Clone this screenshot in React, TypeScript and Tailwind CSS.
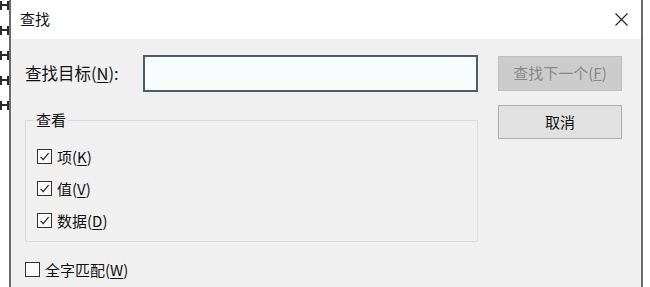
import React from "react"

const font = { fontFamily: '"Noto Sans CJK SC", "Noto Sans", sans-serif' }

function TreeMark() {
  return (
    <div className="relative w-[9px] h-[9px] border-l-2 border-r-2 border-[#2a2a2a]">
      <div className="absolute left-0 right-0 top-[3px] h-[2px] bg-[#2a2a2a]" />
    </div>
  )
}

function CheckBox({ checked }: { checked: boolean }) {
  return (
    <div className="w-[15px] h-[15px] border border-[#333] bg-[#fafafa] flex items-center justify-center">
      {checked && (
        <svg width="11" height="11" viewBox="0 0 11 11">
          <path d="M1.5 5.8 L4.2 8.6 L9.6 2.2" fill="none" stroke="#222" strokeWidth="1.2" />
        </svg>
      )}
    </div>
  )
}

function CheckRow({ label, k, checked }: { label: string; k: string; checked: boolean }) {
  return (
    <div className="flex items-center gap-[5px] h-[22px]">
      <CheckBox checked={checked} />
      <span className="text-[15px] text-[#111] leading-none">
        {label}(<span className="underline underline-offset-2">{k}</span>)
      </span>
    </div>
  )
}

export default function App() {
  return (
    <div className="w-[650px] h-[287px] flex bg-white overflow-hidden" style={font}>
      <div className="w-[9px] flex flex-col gap-[16px] pt-[1px]">
        <TreeMark />
        <TreeMark />
        <TreeMark />
        <TreeMark />
        <TreeMark />
      </div>

      <div className="w-[634px] h-[287px] flex flex-col border-l-2 border-r-2 border-[#6b6b6b]">
        <div className="h-[39px] bg-white flex items-center justify-between pl-[9px] pr-[13px]">
          <span className="text-[15px] text-[#111]">查找</span>
          <svg width="13" height="13" viewBox="0 0 13 13">
            <path d="M0.5 0.5 L12.5 12.5 M12.5 0.5 L0.5 12.5" stroke="#222" strokeWidth="1.1" />
          </svg>
        </div>

        <div className="flex-1 bg-[#f0f0f0] flex">
          <div className="w-[453px] ml-[14px] flex flex-col">
            <div className="mt-[16px] h-[37px] flex items-center">
              <span className="w-[118px] text-[16.5px] text-[#111]">
                查找目标(<span className="underline underline-offset-2">N</span>):
              </span>
              <div className="flex-1 h-[37px] border-2 border-[#475f6a] bg-[#f8fcfd]" />
            </div>

            <div className="relative mt-[28px] h-[122px] border border-[#dadada] pt-[24px] pl-[11px] flex flex-col gap-[10px]">
              <span className="absolute -top-[11px] left-[8px] px-[2px] bg-[#f0f0f0] text-[15px] leading-[20px] text-[#111]">
                查看
              </span>
              <CheckRow label="项" k="K" checked />
              <CheckRow label="值" k="V" checked />
              <CheckRow label="数据" k="D" checked />
            </div>

            <div className="mt-[16px]">
              <CheckRow label="全字匹配" k="W" checked={false} />
            </div>
          </div>

          <div className="w-[124px] ml-[20px] flex flex-col">
            <div className="mt-[17px] h-[35px] bg-[#cccccc] border border-[#bfbfbf] flex items-center justify-center text-[15px] text-[#888]">
              查找下一个(<span className="underline">F</span>)
            </div>
            <div className="mt-[14px] h-[34px] bg-[#e1e1e1] border border-[#adadad] flex items-center justify-center text-[15px] text-[#111]">
              取消
            </div>
          </div>
        </div>
      </div>
    </div>
  )
}
